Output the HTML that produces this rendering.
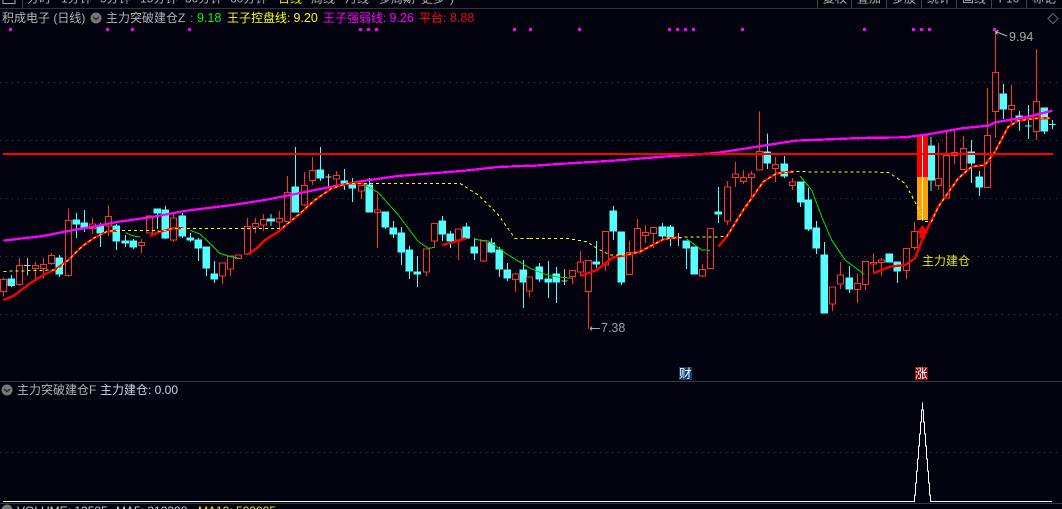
<!DOCTYPE html>
<html><head><meta charset="utf-8">
<style>
html,body{margin:0;padding:0;background:#03030f;width:1062px;height:509px;overflow:hidden}
svg{display:block}
text{font-family:"Liberation Sans","Noto Sans CJK SC",sans-serif;font-size:12px}
.n{font-size:12.500px}
.r{fill:none;stroke:#ff3232;stroke-width:3;shape-rendering:crispEdges}
.c{fill:#54ffff;stroke:#54ffff;stroke-width:3;shape-rendering:crispEdges}
.g{fill:none;stroke:#c8c8c8;stroke-width:3;shape-rendering:crispEdges}
.m{fill:none;stroke:#ff00ff;stroke-width:7;shape-rendering:crispEdges}
.rl{fill:none;stroke:#ff0000;stroke-width:7;shape-rendering:crispEdges}
.gl{fill:none;stroke:#00e000;stroke-width:3;shape-rendering:crispEdges}
.yl{fill:none;stroke:#ffff00;stroke-width:3;stroke-dasharray:9 9;shape-rendering:crispEdges}
</style></head><body>
<svg width="1062" height="509" viewBox="0 0 1062 509" xmlns="http://www.w3.org/2000/svg">
<rect width="1062" height="509" fill="#03030f"/>
<!-- toolbar -->
<g fill="#b0b0b0">
<text x="27" y="2.500">分时</text><text x="61" y="2.500">1分钟</text><text x="100" y="2.500">5分钟</text><text x="140" y="2.500">15分钟</text><text x="185" y="2.500">30分钟</text><text x="230" y="2.500">60分钟</text>
<text x="278" y="2.500" fill="#e8e800">日线</text><text x="311" y="2.500">周线</text><text x="345" y="2.500">月线</text><text x="379" y="2.500">多周期</text><text x="421" y="2.500">更多</text><text x="450" y="2.500">)</text>
<g text-anchor="middle"><text x="835" y="2.500">复权</text><text x="869" y="2.500">叠加</text><text x="904" y="2.500">多股</text><text x="939" y="2.500">统计</text><text x="974" y="2.500">画线</text><text x="1009" y="2.500">F10</text><text x="1044" y="2.500">标记</text></g>
</g>
<path d="M3 0V3.500H15V0" fill="none" stroke="#aaa"/>
<rect x="0" y="8" width="1062" height="1" fill="#333"/>
<g fill="#444"><rect x="22" y="0" width="1" height="8"/><rect x="817" y="0" width="1" height="8"/><rect x="851" y="0" width="1" height="8"/><rect x="886" y="0" width="1" height="8"/><rect x="921" y="0" width="1" height="8"/><rect x="956" y="0" width="1" height="8"/><rect x="991" y="0" width="1" height="8"/><rect x="1026" y="0" width="1" height="8"/></g>
<!-- header -->
<text x="2" y="22" fill="#b4b4b4">积成电子 (日线)</text>
<circle cx="96" cy="18" r="5.5" fill="#777"/><path d="M93 17l3 2.5 3-2.5" fill="none" stroke="#222" stroke-width="1.3"/>
<text x="106" y="22" fill="#b4b4b4">主力突破建仓Z</text>
<text x="190" y="22" fill="#00e000">:</text><text class="n" x="197" y="22" fill="#00ff00">9.18</text>
<text x="227" y="22" fill="#ffff00">王子控盘线:</text><text class="n" x="293.500" y="22" fill="#ffff00">9.20</text>
<text x="323" y="22" fill="#ff00ff">王子强弱线:</text><text class="n" x="389.500" y="22" fill="#ff00ff">9.26</text>
<text x="419" y="22" fill="#ff1010">平台:</text><text class="n" x="450" y="22" fill="#e01010">8.88</text>
<path d="M1053 13.500l5 5-5 5-5-5z" fill="none" stroke="#666"/>
<!-- magenta dots -->
<g fill="#ff00ff"><rect x="9" y="28" width="3" height="3"/><rect x="106" y="28" width="3" height="3"/><rect x="131" y="28" width="3" height="3"/><rect x="188" y="28" width="3" height="3"/><rect x="359" y="28" width="3" height="3"/><rect x="367" y="28" width="3" height="3"/><rect x="375" y="28" width="3" height="3"/><rect x="513" y="28" width="3" height="3"/><rect x="529" y="28" width="3" height="3"/><rect x="578" y="28" width="3" height="3"/><rect x="668" y="28" width="3" height="3"/><rect x="676" y="28" width="3" height="3"/><rect x="684" y="28" width="3" height="3"/><rect x="692" y="28" width="3" height="3"/><rect x="741" y="28" width="3" height="3"/><rect x="863" y="28" width="3" height="3"/><rect x="912" y="28" width="3" height="3"/><rect x="920" y="28" width="3" height="3"/><rect x="928" y="28" width="3" height="3"/><rect x="993" y="28" width="3" height="3"/></g>
<!-- grid -->
<g stroke="#3c3c3c" stroke-width="1" stroke-dasharray="1 5" shape-rendering="crispEdges">
<path d="M0 82.500H1062M0 140.500H1062M0 198.500H1062M0 256.500H1062M0 314.500H1062M0 452.500H1062"/></g>

<!-- candles A -->
<g transform="translate(0,140) scale(.33333)">
<path class="r" d="M10 412V418M10 455V470M1 418H19V455H1ZM58 354V376M58 434V436M49 376H67V434H49ZM106 366V376M106 386V415M97 376H115V386H97ZM130 354V373M130 386V415M121 373H139V386H121ZM154 339V346M154 371V375M145 346H163V371H145ZM205 205V241M205 407V410M196 241H214V407H196ZM277 234V252M277 265V282M268 252H286V265H268ZM325 195V229M325 258V288M316 229H334V258H316ZM424 297V307M424 317V339M415 307H433V317H415ZM448 225V228M439 228H457V279H439ZM520 219V234M520 300V306M511 234H529V300H511ZM667 408V432M658 369H676V408H658ZM691 387V408M682 348H700V387H682ZM715 356V358M706 345H724V356H706ZM742 234V259M742 342V345M733 259H751V342H733ZM766 234V250M766 261V279M757 250H775V261H757ZM790 222V238M790 255V273M781 238H799V255H781Z"/>
<path class="c" d="M34 405V441M24 417H44V437H24ZM178 345V411M168 354H188V402H168ZM229 219V294M219 240H239V252H219ZM253 210V276M243 249H263V261H243ZM301 249V321M291 258H311V279H291ZM349 252V330M339 258H359V303H339ZM376 285V321M366 303H386V309H366ZM400 297V327M390 303H410V321H390ZM472 207V267M462 207H482V219H462ZM496 198V297M486 210H506V294H486ZM547 219V294M537 228H557V288H537ZM571 279V306M561 294H581V300H561ZM595 294V363M585 300H605V324H585ZM619 321V408M609 321H629V384H609ZM643 363V429M633 402H653V417H633Z"/>
<path class="g" d="M82 354V407M72 376H91"/>
</g>
<!-- candles B -->
<g transform="translate(265,140) scale(.33333)">
<path class="r" d="M43 213V235M43 246V270M34 235H52V246H34ZM67 108V157M58 157H76V245H58ZM118 96V136M118 195V198M109 136H127V195H109ZM142 51V91M142 122V135M133 91H151V122H133ZM214 93V106M214 117V138M205 106H223V117H205ZM289 153V177M280 136H298V153H280ZM337 160V210M337 218V324M328 210H346V218H328ZM484 396V408M475 327H493V396H475ZM508 303V324M499 250H517V303H499ZM580 300V360M571 267H589V300H571ZM655 363V366M646 303H664V363H646ZM751 399V402M751 419V456M742 402H760V419H742Z"/>
<path class="c" d="M18 222V258M8 237H28V243H8ZM91 21V216M81 141H101V216H81ZM166 21V123M156 90H176V114H156ZM238 87V150M228 123H248V129H228ZM262 114V186M252 135H272V144H252ZM313 114V216M303 135H323V216H303ZM361 216V267M351 216H371V261H351ZM385 243V294M375 264H395V282H375ZM409 261V375M399 279H419V336H399ZM433 318V417M423 330H443V393H423ZM457 348V441M447 396H467V402H447ZM532 228V303M522 243H542V282H522ZM556 273V324M546 282H566V303H546ZM604 249V297M594 261H614V294H594ZM628 294V360M618 321H638V339H618ZM679 294V339M669 309H689V336H669ZM703 321V411M693 330H713V387H693ZM727 369V423M717 390H737V414H717ZM775 360V504M765 390H785V426H765Z"/>
<path class="g" d="M190 102V138M181 111H199"/>
</g>
<!-- candles C -->
<g transform="translate(530,140) scale(.33333)">
<path class="r" d="M-2 453V471M-11 411H7V453H-11ZM127 410V432M118 391H136V410H118ZM151 333V366M151 396V408M142 366H160V396H142ZM175 455V565M166 361H184V455H166ZM226 375V393M217 274H235V375H217ZM298 303V337M289 337H307V404H289ZM322 237V265M313 265H331V339H313ZM346 255V277M346 287V309M337 277H355V287H337ZM370 281V324M361 262H379V281H361ZM517 372V388M517 408V411M508 388H526V408H508ZM532 265H550V386H532ZM592 123V141M592 243V255M583 141H601V243H583ZM616 66V102M616 113V141M607 102H625V113H607ZM640 90V112M640 125V132M631 112H649V125H631ZM664 93V102M664 113V180M655 102H673V113H655ZM688 -85V35M679 35H697V90H679ZM736 51V73M736 86V126M727 73H745V86H727ZM787 114V126M787 137V150M778 126H796V137H778Z"/>
<path class="c" d="M28 369V426M18 381H38V417H18ZM55 363V474M45 417H65V426H45ZM79 381V489M69 402H89V426H69ZM199 303V384M189 366H209V372H189ZM250 198V300M240 213H260V273H240ZM274 276V435M264 276H284V426H264ZM397 249V297M387 261H407V288H387ZM421 255V318M411 261H431V294H411ZM469 303V387M459 303H479V324H459ZM493 321V404M483 321H503V402H483ZM565 141V249M555 216H575V222H555ZM712 -20V87M702 36H722V69H702ZM763 48V114M753 72H773V108H753Z"/>
<path class="g" d="M103 387V435M94 423H112M445 279V318M436 294H454"/>
</g>
<!-- candles D -->
<g transform="translate(795,20) scale(.33333)">
<path class="r" d="M112 852V873M103 801H121V852H103ZM136 726V765M136 792V807M127 765H145V792H127ZM187 760V790M187 808V849M178 790H196V808H178ZM211 794V810M202 724H220V794H202ZM235 699V727M235 732V760M226 727H244V732H226ZM259 714V720M259 728V768M250 720H268V728H250ZM334 751V777M325 685H343V751H325ZM358 606V634M358 683V690M349 634H367V683H349ZM430 369V475M430 497V510M421 475H439V497H421ZM454 336V406M445 406H463V534H445ZM478 333V397M478 406V432M469 397H487V406H469ZM505 348V385M496 385H514V449H496ZM577 204V346M568 346H586V503H568ZM601 36V157M601 275V354M592 157H610V275H592ZM649 195V256M649 269V318M640 256H658V269H640ZM724 87V244M724 335V360M715 244H733V335H715Z"/>
<path class="c" d="M17 486V561M7 486H27V546H7ZM40 504V633M30 540H50V627H30ZM64 603V702M54 624H74V684H54ZM88 666V879M78 705H98V879H78ZM163 738V819M153 774H173V807H153ZM273 702H293V726H273ZM307 726V789M297 726H317V753H297ZM408 351V513M398 378H418V480H398ZM529 360V489M519 396H539V429H519ZM553 453V528M543 471H563V501H543ZM625 192V297M615 222H635V267H615ZM673 273V333M663 288H683V303H663ZM700 255V357M690 318H710ZM748 264V342M738 264H758V333H738ZM772 300V327M762 313H782Z"/>
</g>

<!-- overlay lines -->
<g transform="translate(0,140) scale(.33333)">
<polyline class="m" points="10,302 60,296 130,288 205,273 280,260 350,246 450,232 560,212 690,196 795,180"/>
<polyline class="rl" points="10,480 40,468 90,430 130,405 170,386 205,360 245,320 280,295 320,275 350,272"/>
<polyline class="rl" points="450,288 480,275 520,265 550,264"/>
<polyline class="rl" points="745,342 770,325 795,300"/>
<polyline class="gl" points="376,278 400,288 420,291"/>
<polyline class="gl" points="571,271 600,282 630,310 660,340 690,350 715,354"/>
<polyline class="yl" points="10,394 170,390 205,360 245,320 280,295 320,275 350,271 470,271 480,275 520,265 795,265"/>
</g>
<g transform="translate(265,140) scale(.33333)">
<polyline class="m" points="0,180 100,160 200,140 300,122 400,108 500,100 600,92 700,81 795,77"/>
<polyline class="rl" points="0,300 40,275 100,225 150,180 200,145 250,130 295,130"/>
<polyline class="rl" points="532,315 570,305 604,295"/>
<polyline class="gl" points="295,132 340,158 400,225 460,305 490,325 508,322"/>
<polyline class="gl" points="628,298 670,303 730,345 795,385"/>
<polyline class="yl" points="0,265 50,265 100,225 150,180 200,145 250,130 585,130 600,140 640,165 700,225 750,295 795,295"/>
</g>
<g transform="translate(530,140) scale(.33333)">
<polyline class="m" points="0,78 100,71 250,62 400,50 520,42 565,38 650,25 795,2"/>
<polyline class="rl" points="151,408 200,390 250,352 290,345 330,335 400,298 445,292"/>
<polyline class="rl" points="565,320 590,290 640,210 700,125 740,100 790,95"/>
<polyline class="gl" points="0,385 60,408 125,415"/>
<polyline class="gl" points="469,296 515,330 540,331"/>
<polyline class="yl" points="0,295 110,295 170,305 210,330 240,345 290,345 330,335 400,298 445,292 590,290 640,210 700,125 740,100 790,95"/>
</g>
<!-- big bar -->
<rect x="917" y="135" width="11" height="42" fill="#ff0000"/>
<rect x="917" y="177" width="11" height="43" fill="#ffa000"/>
<rect x="922" y="135" width="1" height="85" fill="#ffe8e8"/>
<g transform="translate(795,20) scale(.33333)">
<polyline class="m" points="0,362 200,354 330,352 400,343 500,325 580,317 600,307 700,290 772,272"/>
<polyline class="rl" points="235,760 285,740 330,735 360,715 385,650 430,560 490,475 530,440 570,435 600,395 640,320 670,302 720,295 765,295"/>
<polyline class="gl" points="15,468 50,510 80,590 110,660 150,720 208,763"/>
<polyline class="yl" points="5,455 280,457 330,490 365,555 385,605 410,605 430,560 490,475 530,440 570,435 600,395 640,320 670,302 720,295 770,293"/>
<path d="M382 615L400 640H391V655H373V640H364Z" fill="#ff0000"/>
</g>
<rect x="3" y="153" width="1050" height="2" fill="#ff0000"/>
<!-- annotations -->
<path d="M590 328.500H600M590 328.500l2-2M590 328.500l2 2" stroke="#aaa" fill="none"/>
<text class="n" x="601" y="332" fill="#a0a0a0">7.38</text>
<path d="M995.500 31.500L1007 36M995.500 31.500l3-1M995.500 31.500l2 3" stroke="#bbb" fill="none"/>
<text class="n" x="1009" y="41" fill="#a8a8a8">9.94</text>
<text x="922" y="265" fill="#e6e600">主力建仓</text>
<rect x="679" y="367" width="13" height="13" fill="#0c3f70"/><text x="679" y="378" fill="#fff" style="font-size:12.500px">财</text>
<rect x="915" y="367" width="13" height="13" fill="#8a0a0a"/><text x="915" y="378" fill="#fff" style="font-size:12.500px">涨</text>
<!-- lower panel -->
<rect x="0" y="381" width="1062" height="1" fill="#3a3a3a"/>
<circle cx="7" cy="390" r="5.5" fill="#777"/><path d="M4 389l3 2.500 3-2.500" fill="none" stroke="#222" stroke-width="1.3"/>
<text x="17" y="394" fill="#b4b4b4">主力突破建仓F</text>
<text x="100" y="394" fill="#c8d8e8">主力建仓: 0.00</text>
<g transform="translate(650,360) scale(.33333)">
<path d="M-1941 424.500H793V405H796V369H799V333H802V297H805V258H808V222H811V186H814V150H817V129H818V150H821V186H824V222H827V258H830V297H833V333H836V369H839V405H842V424.500H1206" fill="none" stroke="#fff" stroke-width="3" shape-rendering="crispEdges"/>
</g>
<rect x="0" y="503" width="1062" height="1" fill="#3a3a3a"/>
<circle cx="7" cy="510" r="5.5" fill="#777"/>
<text x="17" y="515" fill="#d0d0d0">VOLUME: 12585</text><text x="116" y="515" fill="#d0d0d0">MA5: 312398</text><text x="198" y="515" fill="#e8e800">MA10: 599995</text>
</svg>
</body></html>
